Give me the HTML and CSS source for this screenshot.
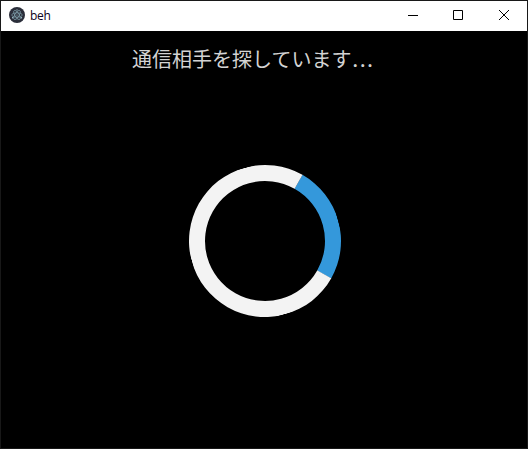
FILE: index.html
```html
<!DOCTYPE html>
<html lang="ja">
<head>
<meta charset="utf-8">
<title>beh</title>
<link rel="stylesheet" href="styles.css">
</head>
<body>
<div class="window">
  <header class="titlebar">
    <svg class="app-icon" width="16" height="16" viewBox="0 0 16 16">
      <circle cx="8" cy="8" r="8" fill="#2b2e3a"/>
      <g fill="none" stroke="#8fb3bf" stroke-width=".6">
        <ellipse cx="8" cy="8" rx="5.2" ry="2.1" />
        <ellipse cx="8" cy="8" rx="5.2" ry="2.1" transform="rotate(60 8 8)"/>
        <ellipse cx="8" cy="8" rx="5.2" ry="2.1" transform="rotate(120 8 8)"/>
      </g>
      <g fill="#a5c8d2">
        <circle cx="8" cy="8" r=".6"/>
        <circle cx="3.6" cy="10.8" r=".7"/>
        <circle cx="12.4" cy="10.8" r=".7"/>
        <circle cx="8" cy="2.8" r=".6"/>
      </g>
    </svg>
    <span class="title">beh</span>
    <div class="controls">
      <svg class="control" width="46" height="30" viewBox="0 0 46 30"><path d="M19 14.5h10"/></svg>
      <svg class="control" width="46" height="30" viewBox="0 0 46 30"><path d="M18.5 9.5h9v9h-9z"/></svg>
      <svg class="control" width="46" height="30" viewBox="0 0 46 30"><path d="M18 9l10 10M28 9l-10 10"/></svg>
    </div>
  </header>
  <main class="content">
    <p class="message">通信相手を探しています<span class="dots">...</span></p>
    <div class="loader"></div>
  </main>
</div>
</body>
</html>
```
FILE: styles.css
```css
body {
  margin: 0;
  background: #000;
}

.window {
  box-sizing: border-box;
  height: 449px;
  border: 1px solid #181818;
  background: #000;
}

.titlebar {
  display: flex;
  align-items: center;
  height: 30px;
  padding-left: 8px;
  background: #fff;
}

.app-icon {
  position: relative;
  top: -1px;
}

.title {
  margin-left: 5px;
  font: 12px/28px "Open Sans", sans-serif;
  letter-spacing: -0.3px;
  color: #0c0020;
}

.controls {
  display: flex;
  margin-left: auto;
}

.control {
  fill: none;
  stroke: #000;
  stroke-width: 1;
}

.content {
  display: flex;
  flex-direction: column;
}

.message {
  margin: 13px 0 0 131px;
  height: 30px;
  font: 400 20px/30px "Noto Sans CJK JP", sans-serif;
  white-space: nowrap;
  color: #d3d3d3;
}

.dots {
  margin-left: 1px;
  font-family: "Open Sans", sans-serif;
  font-weight: 600;
  letter-spacing: 2px;
}

.loader {
  width: 120px;
  height: 120px;
  margin: 91px 0 0 188px;
  border: 16px solid #f3f3f3;
  border-top-color: #3498db;
  border-radius: 50%;
  transform: rotate(74.5deg);
}
```
